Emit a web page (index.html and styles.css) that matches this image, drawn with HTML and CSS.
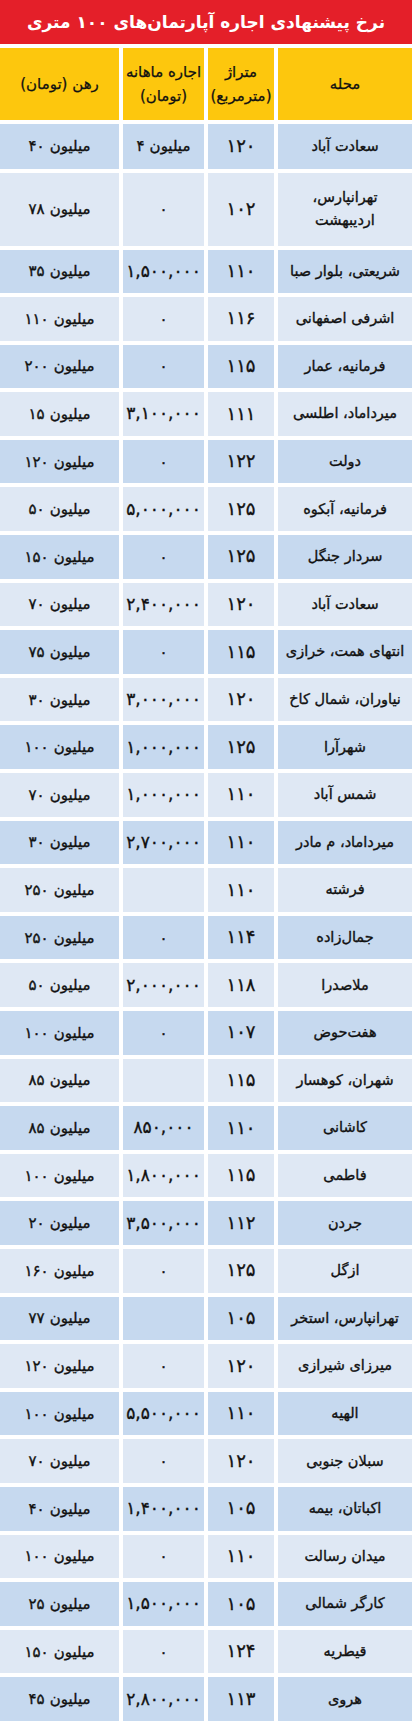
FILE: index.html
```html
<!DOCTYPE html>
<html lang="fa">
<head>
<meta charset="utf-8">
<title>نرخ پیشنهادی اجاره آپارتمان‌های ۱۰۰ متری</title>
<link rel="stylesheet" href="styles.css">
</head>
<body>
<div class="page">
  <div class="title">نرخ پیشنهادی اجاره آپارتمان‌های ۱۰۰ متری</div>
  <div class="table">
    <div class="row head">
      <div class="cell">محله</div>
      <div class="cell">متراژ<br>(مترمربع)</div>
      <div class="cell">اجاره ماهانه<br>(تومان)</div>
      <div class="cell">رهن (تومان)</div>
    </div>
    <div class="row dark first"><div class="cell">سعادت آباد</div><div class="cell area">۱۲۰</div><div class="cell num"><span>۴</span><span>میلیون</span></div><div class="cell num"><span>۴۰</span><span>میلیون</span></div></div>
    <div class="row light tall"><div class="cell">تهرانپارس،<br>اردیبهشت</div><div class="cell area">۱۰۲</div><div class="cell num">۰</div><div class="cell num"><span>۷۸</span><span>میلیون</span></div></div>
    <div class="row dark"><div class="cell">شریعتی، بلوار صبا</div><div class="cell area">۱۱۰</div><div class="cell num big">۱,۵۰۰,۰۰۰</div><div class="cell num"><span>۳۵</span><span>میلیون</span></div></div>
    <div class="row light"><div class="cell">اشرفی اصفهانی</div><div class="cell area">۱۱۶</div><div class="cell num">۰</div><div class="cell num"><span>۱۱۰</span><span>میلیون</span></div></div>
    <div class="row dark"><div class="cell">فرمانیه، عمار</div><div class="cell area">۱۱۵</div><div class="cell num">۰</div><div class="cell num"><span>۲۰۰</span><span>میلیون</span></div></div>
    <div class="row light"><div class="cell">میرداماد، اطلسی</div><div class="cell area">۱۱۱</div><div class="cell num big">۳,۱۰۰,۰۰۰</div><div class="cell num"><span>۱۵</span><span>میلیون</span></div></div>
    <div class="row dark"><div class="cell">دولت</div><div class="cell area">۱۲۲</div><div class="cell num">۰</div><div class="cell num"><span>۱۲۰</span><span>میلیون</span></div></div>
    <div class="row light"><div class="cell">فرمانیه، آبکوه</div><div class="cell area">۱۲۵</div><div class="cell num big">۵,۰۰۰,۰۰۰</div><div class="cell num"><span>۵۰</span><span>میلیون</span></div></div>
    <div class="row dark"><div class="cell">سردار جنگل</div><div class="cell area">۱۲۵</div><div class="cell num">۰</div><div class="cell num"><span>۱۵۰</span><span>میلیون</span></div></div>
    <div class="row light"><div class="cell">سعادت آباد</div><div class="cell area">۱۲۰</div><div class="cell num big">۲,۴۰۰,۰۰۰</div><div class="cell num"><span>۷۰</span><span>میلیون</span></div></div>
    <div class="row dark"><div class="cell">انتهای همت، خرازی</div><div class="cell area">۱۱۵</div><div class="cell num">۰</div><div class="cell num"><span>۷۵</span><span>میلیون</span></div></div>
    <div class="row light"><div class="cell">نیاوران، شمال کاخ</div><div class="cell area">۱۲۰</div><div class="cell num big">۳,۰۰۰,۰۰۰</div><div class="cell num"><span>۳۰</span><span>میلیون</span></div></div>
    <div class="row dark"><div class="cell">شهرآرا</div><div class="cell area">۱۲۵</div><div class="cell num big">۱,۰۰۰,۰۰۰</div><div class="cell num"><span>۱۰۰</span><span>میلیون</span></div></div>
    <div class="row light"><div class="cell">شمس آباد</div><div class="cell area">۱۱۰</div><div class="cell num big">۱,۰۰۰,۰۰۰</div><div class="cell num"><span>۷۰</span><span>میلیون</span></div></div>
    <div class="row dark"><div class="cell">میرداماد، م مادر</div><div class="cell area">۱۱۰</div><div class="cell num big">۲,۷۰۰,۰۰۰</div><div class="cell num"><span>۳۰</span><span>میلیون</span></div></div>
    <div class="row light"><div class="cell">فرشته</div><div class="cell area">۱۱۰</div><div class="cell num"></div><div class="cell num"><span>۲۵۰</span><span>میلیون</span></div></div>
    <div class="row dark"><div class="cell">جمال‌زاده</div><div class="cell area">۱۱۴</div><div class="cell num">۰</div><div class="cell num"><span>۲۵۰</span><span>میلیون</span></div></div>
    <div class="row light"><div class="cell">ملاصدرا</div><div class="cell area">۱۱۸</div><div class="cell num big">۲,۰۰۰,۰۰۰</div><div class="cell num"><span>۵۰</span><span>میلیون</span></div></div>
    <div class="row dark"><div class="cell">هفت‌حوض</div><div class="cell area">۱۰۷</div><div class="cell num">۰</div><div class="cell num"><span>۱۰۰</span><span>میلیون</span></div></div>
    <div class="row light"><div class="cell">شهران، کوهسار</div><div class="cell area">۱۱۵</div><div class="cell num"></div><div class="cell num"><span>۸۵</span><span>میلیون</span></div></div>
    <div class="row dark"><div class="cell">کاشانی</div><div class="cell area">۱۱۰</div><div class="cell num big">۸۵۰,۰۰۰</div><div class="cell num"><span>۸۵</span><span>میلیون</span></div></div>
    <div class="row light"><div class="cell">فاطمی</div><div class="cell area">۱۱۵</div><div class="cell num big">۱,۸۰۰,۰۰۰</div><div class="cell num"><span>۱۰۰</span><span>میلیون</span></div></div>
    <div class="row dark"><div class="cell">جردن</div><div class="cell area">۱۱۲</div><div class="cell num big">۳,۵۰۰,۰۰۰</div><div class="cell num"><span>۲۰</span><span>میلیون</span></div></div>
    <div class="row light"><div class="cell">ازگل</div><div class="cell area">۱۲۵</div><div class="cell num">۰</div><div class="cell num"><span>۱۶۰</span><span>میلیون</span></div></div>
    <div class="row dark"><div class="cell">تهرانپارس، استخر</div><div class="cell area">۱۰۵</div><div class="cell num"></div><div class="cell num"><span>۷۷</span><span>میلیون</span></div></div>
    <div class="row light"><div class="cell">میرزای شیرازی</div><div class="cell area">۱۲۰</div><div class="cell num">۰</div><div class="cell num"><span>۱۲۰</span><span>میلیون</span></div></div>
    <div class="row dark"><div class="cell">الهیه</div><div class="cell area">۱۱۰</div><div class="cell num big">۵,۵۰۰,۰۰۰</div><div class="cell num"><span>۱۰۰</span><span>میلیون</span></div></div>
    <div class="row light"><div class="cell">سبلان جنوبی</div><div class="cell area">۱۲۰</div><div class="cell num">۰</div><div class="cell num"><span>۷۰</span><span>میلیون</span></div></div>
    <div class="row dark"><div class="cell">اکباتان، بیمه</div><div class="cell area">۱۰۵</div><div class="cell num big">۱,۴۰۰,۰۰۰</div><div class="cell num"><span>۴۰</span><span>میلیون</span></div></div>
    <div class="row light"><div class="cell">میدان رسالت</div><div class="cell area">۱۱۰</div><div class="cell num">۰</div><div class="cell num"><span>۱۰۰</span><span>میلیون</span></div></div>
    <div class="row dark"><div class="cell">کارگر شمالی</div><div class="cell area">۱۰۵</div><div class="cell num big">۱,۵۰۰,۰۰۰</div><div class="cell num"><span>۲۵</span><span>میلیون</span></div></div>
    <div class="row light"><div class="cell">قیطریه</div><div class="cell area">۱۲۴</div><div class="cell num">۰</div><div class="cell num"><span>۱۵۰</span><span>میلیون</span></div></div>
    <div class="row dark"><div class="cell">هروی</div><div class="cell area">۱۱۳</div><div class="cell num big">۲,۸۰۰,۰۰۰</div><div class="cell num"><span>۴۵</span><span>میلیون</span></div></div>
  </div>
</div>
</body>
</html>
```

FILE: styles.css
```css
html, body {
  margin: 0;
  padding: 0;
  background: #ffffff;
}

.page {
  width: 412px;
  font-family: "DejaVu Sans", "Noto Sans", sans-serif;
  color: #111111;
  direction: rtl;
}

.title {
  height: 44px;
  background: #e41f29;
  color: #ffffff;
  font-weight: bold;
  font-size: 17px;
  display: flex;
  align-items: center;
  justify-content: center;
}

.table {
  display: flex;
  flex-direction: column;
  gap: 4px;
  margin-top: 4px;
}

.row {
  display: grid;
  grid-template-columns: 134px 66px 81px 1fr;
  gap: 4px;
  height: 43.6px;
  font-size: 14.5px;
  -webkit-text-stroke: 0.35px #111111;
}

.row.head {
  height: 72px;
  font-size: 15px;
  -webkit-text-stroke: 0.25px #111111;
}

.row.first {
  height: 44.5px;
}

.row.tall {
  height: 73px;
}

.cell {
  display: flex;
  align-items: center;
  justify-content: center;
  text-align: center;
  line-height: 1.6;
}

.area {
  font-size: 18px;
}

.num {
  direction: ltr;
  flex-direction: row;
  gap: 5px;
  font-size: 15px;
}

.num.big {
  font-size: 17px;
  letter-spacing: 0.3px;
}

.head .cell {
  background: #fdc70d;
}

.dark .cell {
  background: #c6d9ef;
}

.light .cell {
  background: #dfe8f4;
}
```
